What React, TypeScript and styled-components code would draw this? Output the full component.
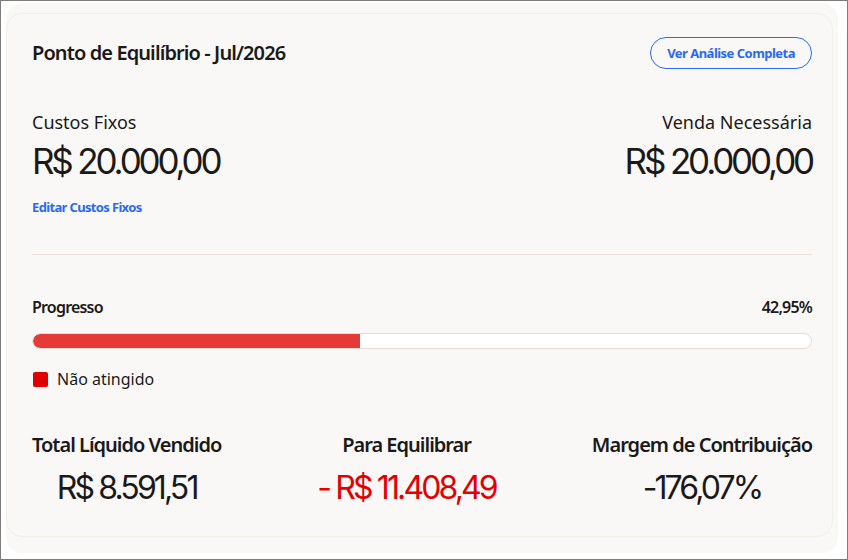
import React from 'react';
import styled, {createGlobalStyle} from 'styled-components';

const ink = '#1b1a19';
const blue = '#2a6af0';
const red = '#e30000';

const Global = createGlobalStyle`
  html, body {
    margin: 0;
    padding: 0;
    background: #ffffff;
  }
  * {
    box-sizing: border-box;
  }
`;

const Frame = styled.div`
  width: 848px;
  height: 560px;
  border: 1px solid #7d7d7d;
  background: #ffffff;
  padding: 2px 9px 6px 5px;
`;

const Card = styled.div`
  height: 100%;
  border-radius: 16px;
  background: #f9f8f6;
  padding: 10px 5px 16px 0;
`;

const Panel = styled.section`
  height: 100%;
  border-radius: 16px;
  border: 1px solid #f3f0ec;
  padding: 23px 20px 0 25px;
  display: flex;
  flex-direction: column;
  color: ${ink};
  font-family: 'Noto Sans', 'Open Sans', sans-serif;
`;

const Header = styled.header`
  display: flex;
  align-items: center;
  justify-content: space-between;
`;

const Title = styled.h2`
  margin: 0;
  font-size: 20px;
  font-weight: 600;
  letter-spacing: -0.045em;
  line-height: 1.3;
`;

const OutlineButton = styled.button`
  height: 32px;
  padding: 0 16px;
  border: 1px solid ${blue};
  border-radius: 999px;
  background: transparent;
  color: ${blue};
  font-family: 'Noto Sans', sans-serif;
  font-size: 13px;
  font-weight: 700;
  letter-spacing: -0.04em;
`;

const Summary = styled.div`
  display: flex;
  justify-content: space-between;
  margin-top: 41px;
`;

const SummaryItem = styled.div<{ $align: 'left' | 'right' }>`
  display: flex;
  flex-direction: column;
  align-items: ${p => (p.$align === 'left' ? 'flex-start' : 'flex-end')};
`;

const Caption = styled.span`
  font-size: 18px;
  line-height: 24px;
`;

const Amount = styled.span<{ $tone?: 'red' }>`
  font-family: Inter, 'Liberation Sans', sans-serif;
  font-size: 32px;
  line-height: 40px;
  letter-spacing: -0.09em;
  color: ${p => (p.$tone === 'red' ? red : ink)};
  white-space: nowrap;
`;

const BigAmount = styled(Amount)`
  margin-top: 6px;
  font-size: 35px;
  line-height: 42px;
  letter-spacing: -0.09em;
`;

const LinkText = styled.a`
  margin-top: 17px;
  color: ${blue};
  font-size: 13px;
  font-weight: 700;
  letter-spacing: -0.05em;
  line-height: 16px;
  cursor: pointer;
`;

const Divider = styled.hr`
  margin: 39px 0 0;
  border: 0;
  border-top: 1px solid #ecdfd8;
`;

const ProgressHead = styled.div`
  display: flex;
  justify-content: space-between;
  margin-top: 42px;
  font-size: 16px;
  font-weight: 600;
  letter-spacing: -0.05em;
  line-height: 20px;
`;

const Track = styled.div`
  margin-top: 16px;
  height: 16px;
  border: 1px solid #e8ddd6;
  border-radius: 999px;
  background: #ffffff;
  overflow: hidden;
`;

const Fill = styled.div`
  height: 100%;
  background: #e53a36;
  border-radius: 999px 0 0 999px;
`;

const Legend = styled.div`
  display: flex;
  align-items: center;
  gap: 9px;
  margin-top: 20px;
  margin-left: 1px;
  font-size: 16px;
  line-height: 20px;
`;

const Swatch = styled.span`
  width: 15px;
  height: 15px;
  border-radius: 2px;
  background: #e10000;
`;

const Stats = styled.div`
  display: flex;
  justify-content: space-between;
  margin-top: 43px;
`;

const Stat = styled.div`
  display: flex;
  flex-direction: column;
  align-items: center;
`;

const StatLabel = styled.span`
  font-size: 20px;
  font-weight: 600;
  letter-spacing: -0.05em;
  line-height: 26px;
`;

const StatValue = styled(Amount)`
  margin-top: 10px;
`;

const progress = 42.0;

export default function App() {
  return (
    <>
      <Global/>
      <Frame>
        <Card>
          <Panel>
            <Header>
              <Title>Ponto de Equilíbrio - Jul/2026</Title>
              <OutlineButton>Ver Análise Completa</OutlineButton>
            </Header>

            <Summary>
              <SummaryItem $align="left">
                <Caption>Custos Fixos</Caption>
                <BigAmount>R$ 20.000,00</BigAmount>
                <LinkText>Editar Custos Fixos</LinkText>
              </SummaryItem>
              <SummaryItem $align="right">
                <Caption>Venda Necessária</Caption>
                <BigAmount>R$ 20.000,00</BigAmount>
              </SummaryItem>
            </Summary>

            <Divider/>

            <ProgressHead>
              <span>Progresso</span>
              <span>42,95%</span>
            </ProgressHead>
            <Track>
              <Fill style={{width: `${progress}%`}}/>
            </Track>
            <Legend>
              <Swatch/>
              <span>Não atingido</span>
            </Legend>

            <Stats>
              <Stat>
                <StatLabel>Total Líquido Vendido</StatLabel>
                <StatValue>R$ 8.591,51</StatValue>
              </Stat>
              <Stat>
                <StatLabel>Para Equilibrar</StatLabel>
                <StatValue $tone="red">- R$ 11.408,49</StatValue>
              </Stat>
              <Stat>
                <StatLabel>Margem de Contribuição</StatLabel>
                <StatValue>-176,07%</StatValue>
              </Stat>
            </Stats>
          </Panel>
        </Card>
      </Frame>
    </>
  );
}
